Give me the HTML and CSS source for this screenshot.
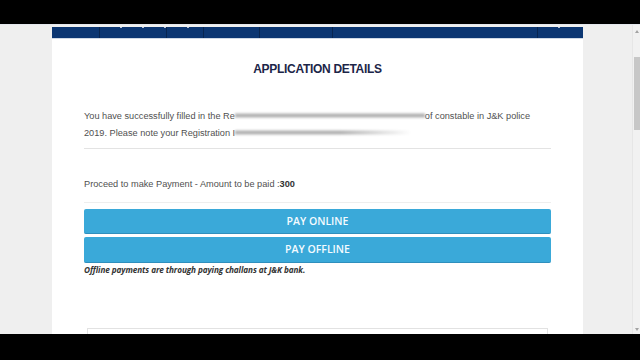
FILE: index.html
```html
<!DOCTYPE html>
<html lang="en">

<head>
    <meta charset="UTF-8">
    <meta name="viewport" content="width=device-width, initial-scale=1.0">
    <title>Application Details</title>
    <link rel="stylesheet" href="styles.css">
</head>

<body>
    <div class="screen">
        <div class="page">
            <div class="panel">
                <div class="nav">
                    <span class="nav_item w48"></span>
                    <span class="nav_item w67"><i></i><i></i><i></i></span>
                    <span class="nav_item w38"><i></i></span>
                    <span class="nav_item w56"></span>
                    <span class="nav_item w72"></span>
                    <span class="nav_item w205"></span>
                    <span class="nav_item last"><i></i></span>
                </div>

                <div class="content">
                    <h2 class="title">APPLICATION DETAILS</h2>

                    <div class="info">
                        <div class="info_line">You have successfully filled in the Re<span class="smudge s1"></span>of constable in J&amp;K police</div>
                        <div class="info_line">2019. Please note your Registration I<span class="smudge s2"></span></div>
                    </div>

                    <hr class="line">

                    <p class="amount">Proceed to make Payment - Amount to be paid :<b>300</b></p>

                    <hr class="line line2">

                    <a class="pay_btn" href="#">PAY ONLINE</a>
                    <a class="pay_btn" href="#">PAY OFFLINE</a>
                    <p class="note">Offline payments are through paying challans at J&amp;K bank.</p>

                    <div class="next_box"></div>
                </div>
            </div>
        </div>
        <div class="scrollbar">
            <span class="arrow up"></span>
            <span class="thumb"></span>
            <span class="arrow down"></span>
        </div>
    </div>
</body>

</html>
```

FILE: styles.css
```css
* {
    box-sizing: border-box;
}

html,
body {
    margin: 0;
    padding: 0;
    background: #000;
    overflow: hidden;
}

.screen {
    margin-top: 24px;
    height: 310px;
    display: flex;
    background: #efefef;
    border-top: 1px solid #e4e8ee;
}

.page {
    flex: 1;
    padding-left: 52px;
    padding-top: 2px;
}

.panel {
    width: 531px;
    height: 100%;
    background: #fff;
}

/* top menu, cut off by the screen edge */
.nav {
    display: flex;
    height: 12px;
    background: #0b3672;
    border-bottom: 1px solid #cfd9e6;
}

.nav_item {
    height: 100%;
    border-right: 1px solid #072550;
}

.nav_item i {
    display: inline-block;
    width: 2px;
    height: 1px;
    margin: 0 0 0 20px;
    vertical-align: top;
    background: #b8c6db;
}

.w48 { width: 48px; }
.w67 { width: 67px; }
.w38 { width: 37px; }
.w56 { width: 56px; }
.w72 { width: 73px; }
.w205 { width: 205px; }

.nav_item.last {
    flex: 1;
    border-right: 0;
}

.content {
    padding: 0 32px;
    font-family: "Liberation Sans", Arial, sans-serif;
    color: #505050;
}

.title {
    margin: 23px 0 0;
    text-align: center;
    font-size: 12px;
    line-height: 14px;
    letter-spacing: -0.3px;
    color: #1c2548;
}

.info {
    margin: 32px 0 0;
    font-size: 9.2px;
    line-height: 17px;
}

.info_line {
    white-space: nowrap;
}

.smudge {
    display: inline-block;
    height: 5px;
    vertical-align: 1px;
    background: linear-gradient(#dcdcdc, #a8a8a8 50%, #dcdcdc);
    filter: blur(0.8px);
}

.s1 {
    width: 190px;
}

.s2 {
    width: 176px;
    background: linear-gradient(90deg, rgba(255,255,255,0), rgba(255,255,255,0) 60%, #fff),
        linear-gradient(#dcdcdc, #a8a8a8 50%, #dcdcdc);
}

.line {
    margin: 6px 0 0;
    border: 0;
    border-top: 1px solid #e3e3e3;
}

.amount {
    margin: 27px 0 0;
    font-size: 9.2px;
    line-height: 17px;
}

.amount b {
    color: #333;
}

.line2 {
    margin-top: 9px;
    border-top-color: #eeeeee;
}

.pay_btn {
    display: block;
    height: 25px;
    margin-top: 6px;
    background: #3aa9d9;
    border-bottom: 1px solid #2f8fbd;
    border-radius: 2px;
    color: #f4fbff;
    text-align: center;
    text-decoration: none;
    font-family: "Open Sans", sans-serif;
    font-weight: 600;
    font-size: 10.5px;
    line-height: 25px;
}

.pay_btn + .pay_btn {
    margin-top: 3px;
    height: 26px;
}

.note {
    margin: 1px 0 0;
    font-family: "Open Sans", sans-serif;
    font-style: italic;
    font-weight: 700;
    font-size: 8.2px;
    line-height: 11px;
    color: #333;
    letter-spacing: -0.1px;
}

.next_box {
    margin: 53px 3px 0;
    height: 30px;
    border: 1px solid #e2e2e2;
    background: #fff;
}

.scrollbar {
    position: relative;
    width: 8px;
    background: #f1f1f1;
    border-left: 1px solid #e6e6e6;
}

.thumb {
    position: absolute;
    left: 1px;
    right: 0;
    top: 32px;
    height: 73px;
    background: #c7c7c7;
}

.arrow {
    position: absolute;
    left: 2px;
    width: 0;
    height: 0;
    border-left: 2px solid transparent;
    border-right: 2px solid transparent;
}

.arrow.up {
    top: 5px;
    border-bottom: 3px solid #a3a3a3;
}

.arrow.down {
    bottom: 3px;
    border-top: 3px solid #a3a3a3;
}
```
